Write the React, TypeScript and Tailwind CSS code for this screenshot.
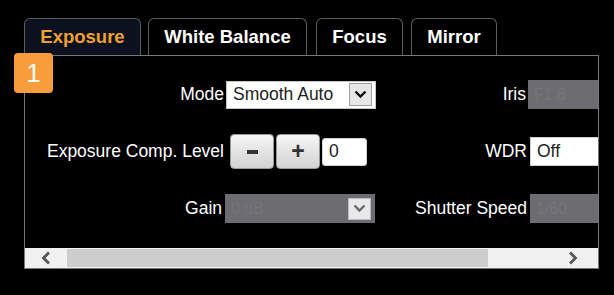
import type { ReactNode } from 'react'

function Chevron({ color = '#111' }: { color?: string }) {
  return (
    <svg width="13" height="9" viewBox="0 0 13 9">
      <polyline points="1.5,1.5 6.5,6.5 11.5,1.5" fill="none" stroke={color} strokeWidth="2.4" />
    </svg>
  )
}

function Tab({ label, active, className }: { label: string; active?: boolean; className: string }) {
  return (
    <div
      className={`flex h-[37px] items-center justify-center rounded-t-[6px] border border-b-0 border-[#5c5c5c] text-[18.5px] font-bold ${
        active ? 'bg-[#0c1120] text-[#f0a030]' : 'bg-black text-white'
      } ${className}`}
    >
      {label}
    </div>
  )
}

function Row({ children }: { children: ReactNode }) {
  return <div className="flex h-[57px] items-center">{children}</div>
}

function Label({ children, className = '' }: { children: ReactNode; className?: string }) {
  return <div className={`whitespace-nowrap text-right text-[17.5px] text-white ${className}`}>{children}</div>
}

function GrayBox({ text, className = '' }: { text: string; className?: string }) {
  return (
    <div className={`flex h-[29px] w-[150px] flex-none items-center bg-[#6c6c71] pl-[6px] text-[16px] text-[#75757a] ${className}`}>
      {text}
    </div>
  )
}

function StepButton({ children }: { children: ReactNode }) {
  return (
    <div className="flex h-[35px] w-[44px] items-center justify-center rounded-[4px] border border-[#9a9a9a] bg-gradient-to-b from-[#f6f6f6] to-[#d2d2d2] text-[23px] font-bold leading-none text-[#333]">
      {children}
    </div>
  )
}

export default function App() {
  return (
    <div className="relative h-[295px] w-[614px] overflow-hidden bg-black font-['Liberation_Sans',Arial,sans-serif]">
      <div className="flex pl-[24px] pt-[18px]">
        <Tab label="Exposure" active className="w-[117px]" />
        <Tab label="White Balance" className="ml-[7px] w-[159px]" />
        <Tab label="Focus" className="ml-[9px] w-[87px]" />
        <Tab label="Mirror" className="ml-[8px] w-[86px]" />
      </div>

      <div className="ml-[24px] flex h-[214px] w-[575px] flex-col border border-[#777]">
        <div className="flex-1 overflow-hidden pt-[10px]">
          <Row>
            <Label className="w-[200px] flex-none pr-[1px]">Mode</Label>
            <div className="w-[152px] flex-none">
              <div className="ml-[1px] flex h-[28px] w-[150px] items-center justify-between border border-[#c8c8c8] bg-white pl-[6px] pr-[3px] text-[17.5px] text-[#222]">
                <span>Smooth Auto</span>
                <div className="flex h-[23px] w-[23px] items-center justify-center border border-[#a0a0a0] bg-[#e6e6e6]">
                  <Chevron />
                </div>
              </div>
            </div>
            <Label className="w-[150px] flex-none pr-[1px]">Iris</Label>
            <GrayBox text="F1.6" className="ml-[1px]" />
          </Row>

          <Row>
            <Label className="w-[200px] flex-none pr-[1px]">Exposure Comp. Level</Label>
            <div className="flex w-[152px] flex-none items-center gap-[2px] pl-[5px]">
              <StepButton>
                <div className="h-[4px] w-[11px] bg-[#333]" />
              </StepButton>
              <StepButton>+</StepButton>
              <div className="flex h-[28px] w-[45px] flex-none items-center rounded-[3px] border border-[#cfcfcf] bg-white pl-[6px] text-[17.5px] text-[#222]">
                0
              </div>
            </div>
            <Label className="w-[150px] flex-none">WDR</Label>
            <div className="ml-[3px] flex h-[29px] w-[150px] flex-none items-center border border-[#d0d0d0] bg-white pl-[6px] text-[17.5px] text-[#222]">
              Off
            </div>
          </Row>

          <Row>
            <Label className="w-[200px] flex-none pr-[3px]">Gain</Label>
            <div className="w-[152px] flex-none">
              <div className="flex h-[29px] w-[150px] items-center justify-between bg-[#6c6c71] pl-[6px] pr-[4px] text-[16px] text-[#75757a]">
                <span>0 dB</span>
                <div className="flex h-[22px] w-[23px] items-center justify-center border border-[#bdbdbd] bg-[#e8e8e8]">
                  <Chevron color="#6a6a6a" />
                </div>
              </div>
            </div>
            <Label className="w-[150px] flex-none">Shutter Speed</Label>
            <GrayBox text="1/60" className="ml-[3px]" />
          </Row>
        </div>

        <div className="flex h-[20px] flex-none items-stretch bg-[#f1f1f1]">
          <div className="flex w-[42px] items-center justify-center">
            <svg width="10" height="14" viewBox="0 0 10 14">
              <polyline points="8,1.5 2.5,7 8,12.5" fill="none" stroke="#555" strokeWidth="2.8" />
            </svg>
          </div>
          <div className="my-[1px] w-[421px] bg-[#cdcdcd]" />
          <div className="flex flex-1 items-center justify-end pr-[20px]">
            <svg width="10" height="14" viewBox="0 0 10 14">
              <polyline points="2,1.5 7.5,7 2,12.5" fill="none" stroke="#555" strokeWidth="2.8" />
            </svg>
          </div>
        </div>
      </div>

      <div className="absolute left-[14px] top-[53px] flex h-[40px] w-[39px] items-center justify-center rounded-[4px] bg-[#f89c3c] text-[26px] leading-none text-white">
        1
      </div>
    </div>
  )
}
